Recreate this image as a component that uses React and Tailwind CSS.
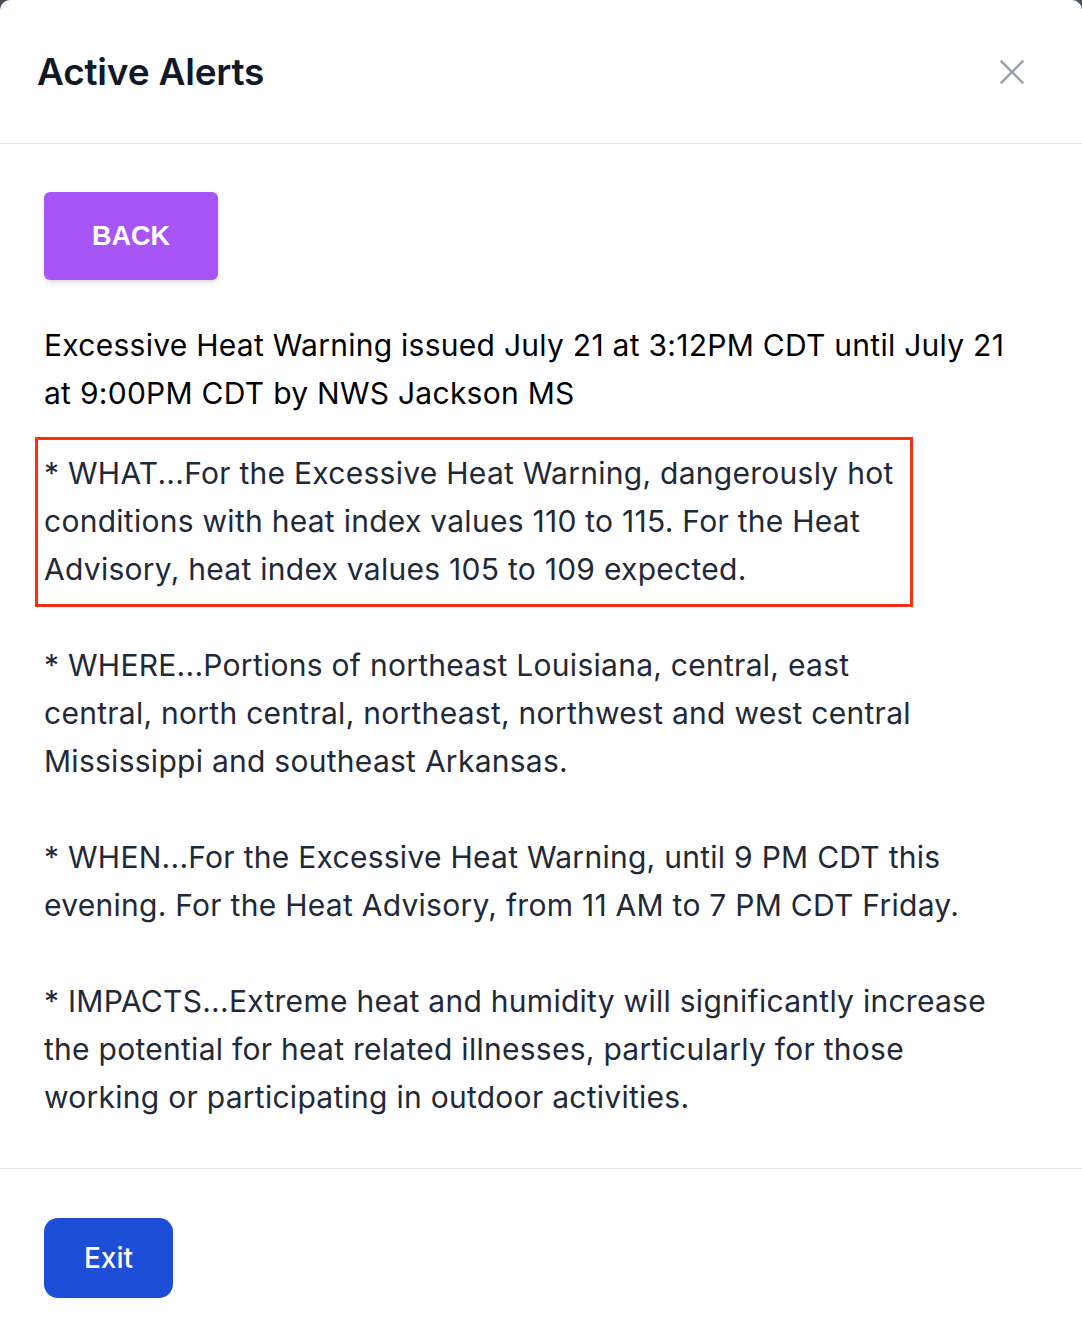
const what = `* WHAT...For the Excessive Heat Warning, dangerously hot
conditions with heat index values 110 to 115. For the Heat
Advisory, heat index values 105 to 109 expected.`;

const rest = `* WHERE...Portions of northeast Louisiana, central, east
central, north central, northeast, northwest and west central
Mississippi and southeast Arkansas.

* WHEN...For the Excessive Heat Warning, until 9 PM CDT this
evening. For the Heat Advisory, from 11 AM to 7 PM CDT Friday.

* IMPACTS...Extreme heat and humidity will significantly increase
the potential for heat related illnesses, particularly for those
working or participating in outdoor activities.`;

export default function App() {
  return (
    <div className="min-h-screen bg-[#4b4f5a]" style={{ fontFamily: 'Inter, "Noto Sans", sans-serif' }}>
      <div className="min-h-screen bg-white rounded-t-[10px] flex flex-col">
        {/* Header */}
        <div className="h-[144px] flex items-center justify-between pl-[37px] pr-[58px] border-b border-[#e5e7eb]">
          <h2 className="text-[37px] font-semibold text-[#111827] tracking-[-0.2px]">Active Alerts</h2>
          <button className="text-[#9ca3af]">
            <svg width="24" height="24" viewBox="0 0 24 24" fill="none" stroke="currentColor" strokeWidth="2.6" strokeLinecap="round">
              <path d="M1.5 1.5l21 21M22.5 1.5l-21 21" />
            </svg>
          </button>
        </div>

        {/* Body */}
        <div className="px-[44px] pt-[48px] pb-[47px] border-b border-[#e5e7eb] tracking-[0.27px]">
          <button
            className="w-[174px] h-[88px] bg-[#a855f7] rounded-md shadow-md text-white font-bold text-[27px] uppercase tracking-normal"
            style={{ fontFamily: '"Liberation Sans", Arial, sans-serif' }}
          >
            Back
          </button>

          <p className="mt-[41px] text-[30px] leading-[48px] text-black whitespace-pre-line">
            {'Excessive Heat Warning issued July 21 at 3:12PM CDT until July 21\nat 9:00PM CDT by NWS Jackson MS'}
          </p>

          {/* highlighted paragraph */}
          <div className="mt-[20px] -ml-[9px] w-[878px] border-[3px] border-[#ff2d12] pl-[6px] pt-[9px] pb-[11px]">
            <p className="text-[30px] leading-[48px] text-[#1f2937] whitespace-pre-line">{what}</p>
          </div>

          <p className="mt-[34px] text-[30px] leading-[48px] text-[#1f2937] whitespace-pre-line">{rest}</p>
        </div>

        {/* Footer */}
        <div className="px-[44px] pt-[49px] pb-[42px]">
          <button className="w-[129px] h-[80px] bg-[#1d4ed8] rounded-[14px] text-white font-medium text-[28px]">
            Exit
          </button>
        </div>
      </div>
    </div>
  );
}
